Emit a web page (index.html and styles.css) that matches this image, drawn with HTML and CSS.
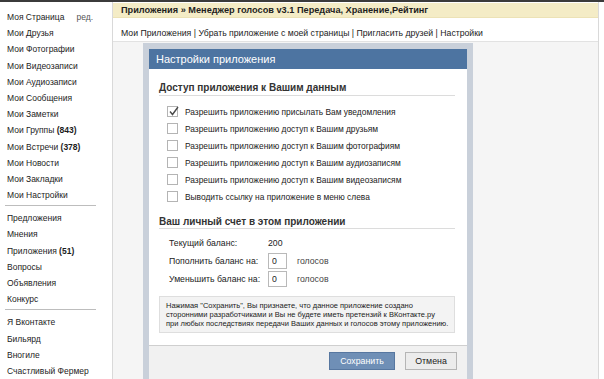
FILE: index.html
```
<!DOCTYPE html>
<html lang="ru">
<head>
    <meta charset="UTF-8">
    <title>Настройки приложения</title>
    <link rel="stylesheet" href="styles.css">
</head>
<body>
    <div class="topline"></div>
    <div class="page">
        <ul class="sidebar">
            <li><a href="#">Моя Страница</a><span class="edit">ред.</span></li>
            <li><a href="#">Мои Друзья</a></li>
            <li><a href="#">Мои Фотографии</a></li>
            <li><a href="#">Мои Видеозаписи</a></li>
            <li><a href="#">Мои Аудиозаписи</a></li>
            <li><a href="#">Мои Сообщения</a></li>
            <li><a href="#">Мои Заметки</a></li>
            <li><a href="#">Мои Группы <b>(843)</b></a></li>
            <li><a href="#">Мои Встречи <b>(378)</b></a></li>
            <li><a href="#">Мои Новости</a></li>
            <li><a href="#">Мои Закладки</a></li>
            <li><a href="#">Мои Настройки</a></li>
            <li class="divider"></li>
            <li><a href="#">Предложения</a></li>
            <li><a href="#">Мнения</a></li>
            <li><a href="#">Приложения <b>(51)</b></a></li>
            <li><a href="#">Вопросы</a></li>
            <li><a href="#">Объявления</a></li>
            <li><a href="#">Конкурс</a></li>
            <li class="divider"></li>
            <li><a href="#">Я Вконтакте</a></li>
            <li><a href="#">Бильярд</a></li>
            <li><a href="#">Вногиле</a></li>
            <li><a href="#">Счастливый Фермер</a></li>
        </ul>

        <div class="main">
            <div class="app-title">Приложения » Менеджер голосов v3.1 Передача, Хранение,Рейтинг</div>
            <div class="app-links">
                <a href="#">Мои Приложения</a> <span class="sep">|</span>
                <a href="#">Убрать приложение с моей страницы</a> <span class="sep">|</span>
                <a href="#">Пригласить друзей</a> <span class="sep">|</span>
                <a href="#">Настройки</a>
            </div>

            <div class="app-area">
                <div class="dialog">
                    <div class="dialog-title">Настройки приложения</div>
                    <div class="dialog-body">
                        <h3 class="section-title">Доступ приложения к Вашим данным</h3>
                        <ul class="checks">
                            <li><span class="checkbox checked"><svg width="11" height="11" viewBox="0 0 11 11"><polyline points="2,5.5 4.5,8.5 10,1" fill="none" stroke="#4a4a4a" stroke-width="1.4"/></svg></span>Разрешить приложению присылать Вам уведомления</li>
                            <li><span class="checkbox"></span>Разрешить приложению доступ к Вашим друзьям</li>
                            <li><span class="checkbox"></span>Разрешить приложению доступ к Вашим фотографиям</li>
                            <li><span class="checkbox"></span>Разрешить приложению доступ к Вашим аудиозаписям</li>
                            <li><span class="checkbox"></span>Разрешить приложению доступ к Вашим видеозаписям</li>
                            <li><span class="checkbox"></span>Выводить ссылку на приложение в меню слева</li>
                        </ul>

                        <h3 class="section-title second">Ваш личный счет в этом приложении</h3>
                        <div class="balance">
                            <div class="balance-row">
                                <span class="balance-label">Текущий баланс:</span>
                                <span>200</span>
                            </div>
                            <div class="balance-row">
                                <span class="balance-label">Пополнить баланс на:</span>
                                <input type="text" class="votes-input" value="0">
                                <span class="unit">голосов</span>
                            </div>
                            <div class="balance-row">
                                <span class="balance-label">Уменьшить баланс на:</span>
                                <input type="text" class="votes-input" value="0">
                                <span class="unit">голосов</span>
                            </div>
                        </div>

                        <div class="notice">
                            Нажимая "Сохранить", Вы признаете, что данное приложение создано<br>
                            сторонними разработчиками и Вы не будете иметь претензий к ВКонтакте.ру<br>
                            при любых последствиях передачи Ваших данных и голосов этому приложению.
                        </div>
                    </div>
                    <div class="dialog-footer">
                        <button class="btn btn-save">Сохранить</button>
                        <button class="btn btn-cancel">Отмена</button>
                    </div>
                </div>
            </div>
        </div>
    </div>
</body>
</html>
```

FILE: styles.css
```
html, body {
    margin: 0;
    padding: 0;
    height: 100%;
    overflow: hidden;
}

body {
    font-family: 'Liberation Sans', Arial, sans-serif;
    font-size: 10px;
    color: #222;
    background: #fff;
}

*, *::before, *::after {
    box-sizing: border-box;
}

a {
    color: inherit;
    text-decoration: none;
}

.topline {
    height: 2px;
    background-color: #3b3b3b;
}

.page {
    display: flex;
    height: calc(100% - 2px);
}

/* left menu */

.sidebar {
    list-style: none;
    margin: 0;
    padding: 7px 0 0 7px;
    width: 113px;
    flex-shrink: 0;
    border-right: 1px solid #d9d9d9;
    font-size: 8.5px;
    color: #1c1c1c;
}

.sidebar li {
    line-height: 16.2px;
    height: 16.2px;
    white-space: nowrap;
}

.sidebar b {
    font-weight: bold;
}

.sidebar .edit {
    color: #555;
    margin-left: 12px;
}

.sidebar li.divider {
    height: 1px;
    margin: 2px 16px 4px -2px;
    background-color: #bdbdbd;
}

/* main column */

.main {
    width: 486px;
    flex-shrink: 0;
    border-right: 1px solid #d9d9d9;
    display: flex;
    flex-direction: column;
}

.app-title {
    margin-top: 1px;
    height: 15px;
    line-height: 15px;
    padding-left: 8px;
    background-color: #f4ecc6;
    border-bottom: 1px solid #ece2b6;
    font-size: 9.2px;
    font-weight: bold;
    color: #1e1e1e;
    white-space: nowrap;
}

.app-links {
    padding: 8px 8px 1px;
    line-height: 14px;
    border-bottom: 1px solid #e2e2e2;
    font-size: 8.7px;
    color: #222;
    white-space: nowrap;
}

.app-area {
    flex: 1;
    background-color: #f5f5f5;
    padding: 1px 0 0 30px;
}

/* dialog */

.dialog {
    width: 330px;
    border: 6px solid #c9d0da;
    border-bottom: none;
    background-color: #fff;
}

.dialog-title {
    height: 20px;
    line-height: 20px;
    padding-left: 7px;
    background-color: #4d74a1;
    color: #fff;
    font-size: 11px;
}

.dialog-body {
    padding: 12px 12px 12px 10px;
}

.section-title {
    margin: 0;
    font-size: 10px;
    font-weight: bold;
    color: #333;
    line-height: 14px;
    border-bottom: 1px solid #dcdcdc;
}

.section-title.second {
    margin-top: 10px;
    line-height: 13px;
}

.checks {
    list-style: none;
    margin: 7px 0 0;
    padding: 0 0 0 8px;
    font-size: 8.4px;
}

.checks li {
    display: flex;
    align-items: center;
    height: 17px;
    white-space: nowrap;
}

.checkbox {
    width: 11px;
    height: 11px;
    margin-right: 7px;
    border: 1px solid #b4b4b4;
    background-color: #fff;
    position: relative;
}

.checkbox svg {
    position: absolute;
    left: 0;
    top: -1px;
}

.balance {
    margin-top: 5px;
    padding-left: 10px;
    font-size: 8.7px;
}

.balance-row {
    display: flex;
    align-items: center;
    height: 18px;
}

.balance-label {
    width: 99px;
    white-space: nowrap;
}

.votes-input {
    width: 19px;
    height: 16px;
    padding: 0 3px;
    border: 1px solid #b9b9b9;
    font-family: inherit;
    font-size: 8.7px;
    color: #222;
}

.unit {
    margin-left: 10px;
    color: #444;
}

.notice {
    margin-top: 8px;
    padding: 4px 6px;
    border: 1px solid #dedede;
    background-color: #f3f3f3;
    font-size: 7.5px;
    line-height: 9px;
    color: #222;
    white-space: nowrap;
}

.dialog-footer {
    display: flex;
    justify-content: flex-end;
    gap: 10px;
    padding: 6px 10px 14px;
    border-top: 1px solid #cfcfcf;
    background-color: #f1f1f1;
}

.btn {
    height: 18px;
    font-family: inherit;
    font-size: 8.8px;
    cursor: pointer;
}

.btn-save {
    width: 66px;
    background-color: #6f8fb6;
    border: 1px solid #5777a0;
    color: #fff;
}

.btn-cancel {
    width: 52px;
    background-color: #ececec;
    border: 1px solid #b5b5b5;
    color: #222;
}
```
